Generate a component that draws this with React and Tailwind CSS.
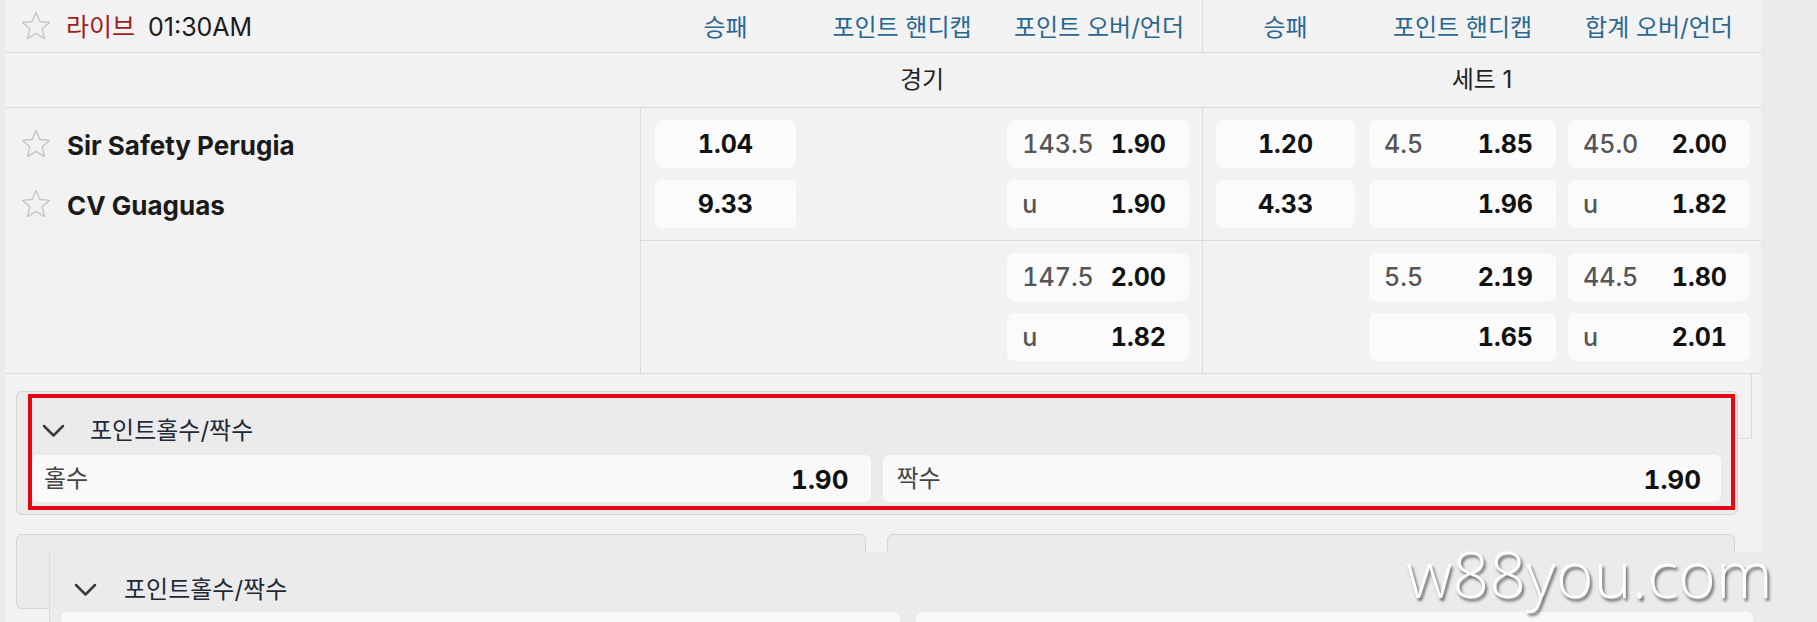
import React from "react";

const FONT = { fontFamily: 'Inter, "Noto Sans CJK KR", sans-serif' };

function Star() {
  return (
    <svg width="32" height="32" viewBox="0 0 24 24" fill="none" stroke="#c6c6c6" strokeWidth="1.05" strokeLinejoin="round">
      <polygon points="12,1.8 14.9,8.6 22.2,9.3 16.7,14.1 18.3,21.4 12,17.6 5.7,21.4 7.3,14.1 1.8,9.3 9.1,8.6" />
    </svg>
  );
}

function Chevron() {
  return (
    <svg width="23" height="14" viewBox="0 0 23 14" fill="none" stroke="#3b3b3b" strokeWidth="2.5" strokeLinecap="round" strokeLinejoin="round">
      <polyline points="2,2 11.5,11.5 21,2" />
    </svg>
  );
}

function Odd({ w, line, odd, center }) {
  if (center) {
    return (
      <div className={`${w} h-[48px] rounded-[7px] bg-[#fbfbfb] flex items-center justify-center pt-[2px] text-[25px] font-bold text-[#111] tabular-nums`}>
        {odd}
      </div>
    );
  }
  return (
    <div className={`${w} h-[48px] rounded-[7px] bg-[#fbfbfb] flex items-center justify-between pt-[2px] pl-[15px] pr-[23px] text-[25px] tabular-nums`}>
      <span className="text-[#555] font-medium">{line}</span>
      <span className="font-bold text-[#111]">{odd}</span>
    </div>
  );
}

function Empty({ w }) {
  return <div className={`${w} h-[48px]`} />;
}

function Block({ rows }) {
  return (
    <div className="flex border-b border-[#dcdcdc]">
      <div className="w-[562px] border-r border-[#dcdcdc] pl-[14px] pr-[13px] pt-[12px] pb-[12px] flex flex-col gap-[12px]">
        {rows.map((r, i) => (
          <div key={i} className="flex">
            {r.g1 ? <Odd w="w-[141px]" odd={r.g1} center /> : <Empty w="w-[141px]" />}
            <div className="w-[212px]" />
            <Odd w="w-[182px]" line={r.g3l} odd={r.g3} />
          </div>
        ))}
      </div>
      <div className="w-[558px] pl-[13px] pr-[11px] pt-[12px] pb-[12px] flex flex-col gap-[12px]">
        {rows.map((r, i) => (
          <div key={i} className="flex">
            {r.s1 ? <Odd w="w-[139px]" odd={r.s1} center /> : <Empty w="w-[139px]" />}
            <div className="w-[14px]" />
            <Odd w="w-[187px]" line={r.s2l} odd={r.s2} />
            <div className="w-[12px]" />
            <Odd w="w-[182px]" line={r.s3l} odd={r.s3} />
          </div>
        ))}
      </div>
    </div>
  );
}

export default function App() {
  const block1 = [
    { g1: "1.04", g3l: "143.5", g3: "1.90", s1: "1.20", s2l: "4.5", s2: "1.85", s3l: "45.0", s3: "2.00" },
    { g1: "9.33", g3l: "u", g3: "1.90", s1: "4.33", s2l: "", s2: "1.96", s3l: "u", s3: "1.82" },
  ];
  const block2 = [
    { g1: null, g3l: "147.5", g3: "2.00", s1: null, s2l: "5.5", s2: "2.19", s3l: "44.5", s3: "1.80" },
    { g1: null, g3l: "u", g3: "1.82", s1: null, s2l: "", s2: "1.65", s3l: "u", s3: "2.01" },
  ];

  return (
    <div className="w-[1817px] h-[622px] bg-[#ebebeb] overflow-hidden relative" style={FONT}>
      <div className="ml-[5px] w-[1756px] h-[622px] bg-[#f2f2f2] flex flex-col">
        {/* header row */}
        <div className="h-[53px] border-b border-[#dcdcdc] flex items-center">
          <div className="w-[636px] h-full flex items-center pl-[15px]">
            <Star />
            <span className="ml-[14px] pt-[4px] text-[25px] text-[#a01d1d]">라이브</span>
            <span className="ml-[13px] pt-[4px] text-[25px] text-[#1b1b1b]">01:30AM</span>
          </div>
          <div className="w-[562px] h-full border-r border-[#dcdcdc] pl-[14px] pt-[4px] flex items-center text-[24px] text-[#2a6890]">
            <div className="w-[141px] text-center">승패</div>
            <div className="w-[212px] text-center">포인트 핸디캡</div>
            <div className="w-[182px] text-center whitespace-nowrap">포인트 오버/언더</div>
          </div>
          <div className="w-[558px] h-full pl-[13px] pt-[4px] flex items-center text-[24px] text-[#2a6890]">
            <div className="w-[139px] text-center">승패</div>
            <div className="w-[14px]" />
            <div className="w-[187px] text-center">포인트 핸디캡</div>
            <div className="w-[12px]" />
            <div className="w-[182px] text-center whitespace-nowrap">합계 오버/언더</div>
          </div>
        </div>
        {/* section row */}
        <div className="h-[55px] border-b border-[#dcdcdc] flex items-center text-[24px] text-[#222]">
          <div className="w-[636px]" />
          <div className="w-[562px] text-center">경기</div>
          <div className="w-[558px] text-center">세트 1</div>
        </div>
        {/* body */}
        <div className="flex">
          <div className="w-[636px] border-r border-b border-[#dcdcdc] pl-[15px] pt-[12px] flex flex-col gap-[12px]">
            <div className="h-[48px] flex items-center">
              <Star />
              <span className="ml-[15px] pt-[2px] text-[26px] font-bold text-[#1a1a1a]">Sir Safety Perugia</span>
            </div>
            <div className="h-[48px] flex items-center">
              <Star />
              <span className="ml-[15px] pt-[2px] text-[26px] font-bold text-[#1a1a1a]">CV Guaguas</span>
            </div>
          </div>
          <div className="flex flex-col">
            <Block rows={block1} />
            <Block rows={block2} />
          </div>
        </div>

        {/* market card (highlighted) */}
        <div className="relative mt-[17px] ml-[11px] w-[1722px] h-[124px] rounded-[6px] border border-[#d4d4d4] bg-[#ebebeb] flex flex-col">
          <div className="mt-[19px] h-[40px] flex items-center pl-[25px]">
            <Chevron />
            <span className="ml-[25px] text-[24px] text-[#1e2a38]">포인트홀수/짝수</span>
          </div>
          <div className="mt-[4px] flex gap-[12px] pl-[15px] pr-[16px]">
            <div className="flex-1 h-[47px] rounded-[6px] bg-[#f9f9f9] flex items-center justify-between pt-[1px] pl-[12px] pr-[22px]">
              <span className="text-[24px] text-[#444]">홀수</span>
              <span className="text-[26px] font-bold text-[#111] tabular-nums">1.90</span>
            </div>
            <div className="flex-1 h-[47px] rounded-[6px] bg-[#f9f9f9] flex items-center justify-between pt-[1px] pl-[14px] pr-[20px]">
              <span className="text-[24px] text-[#444]">짝수</span>
              <span className="text-[26px] font-bold text-[#111] tabular-nums">1.90</span>
            </div>
          </div>
          <div className="absolute left-[11px] top-[2px] w-[1707px] h-[116px] border-[4px] border-[#e30613]" />
        </div>

        {/* second row of cards */}
        <div className="mt-[19px] ml-[11px] flex gap-[21px]">
          <div className="w-[850px] h-[75px] rounded-[6px] border border-[#d4d4d4] bg-[#ebebeb]" />
          <div className="w-[848px] h-[75px] rounded-[6px] border border-[#d4d4d4] bg-[#ebebeb]" />
        </div>
      </div>

      {/* right edge line behind */}
      <div className="absolute left-[1751px] top-[374px] w-[1px] h-[64px] bg-[#dadada]" />
      <div className="absolute left-[1739px] top-[438px] w-[13px] h-[1px] bg-[#dadada]" />

      {/* pasted overlay screenshot */}
      <div className="absolute left-[49px] top-[552px] w-[1736px] h-[80px] bg-[#ebebeb] border-l border-[#dcdcdc]">
        <div className="h-[60px] flex items-center pl-[24px] pt-[16px]">
          <Chevron />
          <span className="ml-[27px] text-[24px] text-[#1e2a38]">포인트홀수/짝수</span>
        </div>
        <div className="flex gap-[16px] pl-[11px] pr-[32px]">
          <div className="w-[839px] h-[40px] rounded-[6px] bg-[#f9f9f9]" />
          <div className="w-[838px] h-[40px] rounded-[6px] bg-[#f9f9f9]" />
        </div>
      </div>

      {/* watermark */}
      <div
        className="absolute left-[1406px] top-[542px] text-[64px] font-light text-white leading-none"
        style={{ fontFamily: '"Open Sans", sans-serif', textShadow: "2px 3px 3px rgba(0,0,0,0.55)", letterSpacing: "0.005em" }}
      >
        w88you.com
      </div>
    </div>
  );
}
